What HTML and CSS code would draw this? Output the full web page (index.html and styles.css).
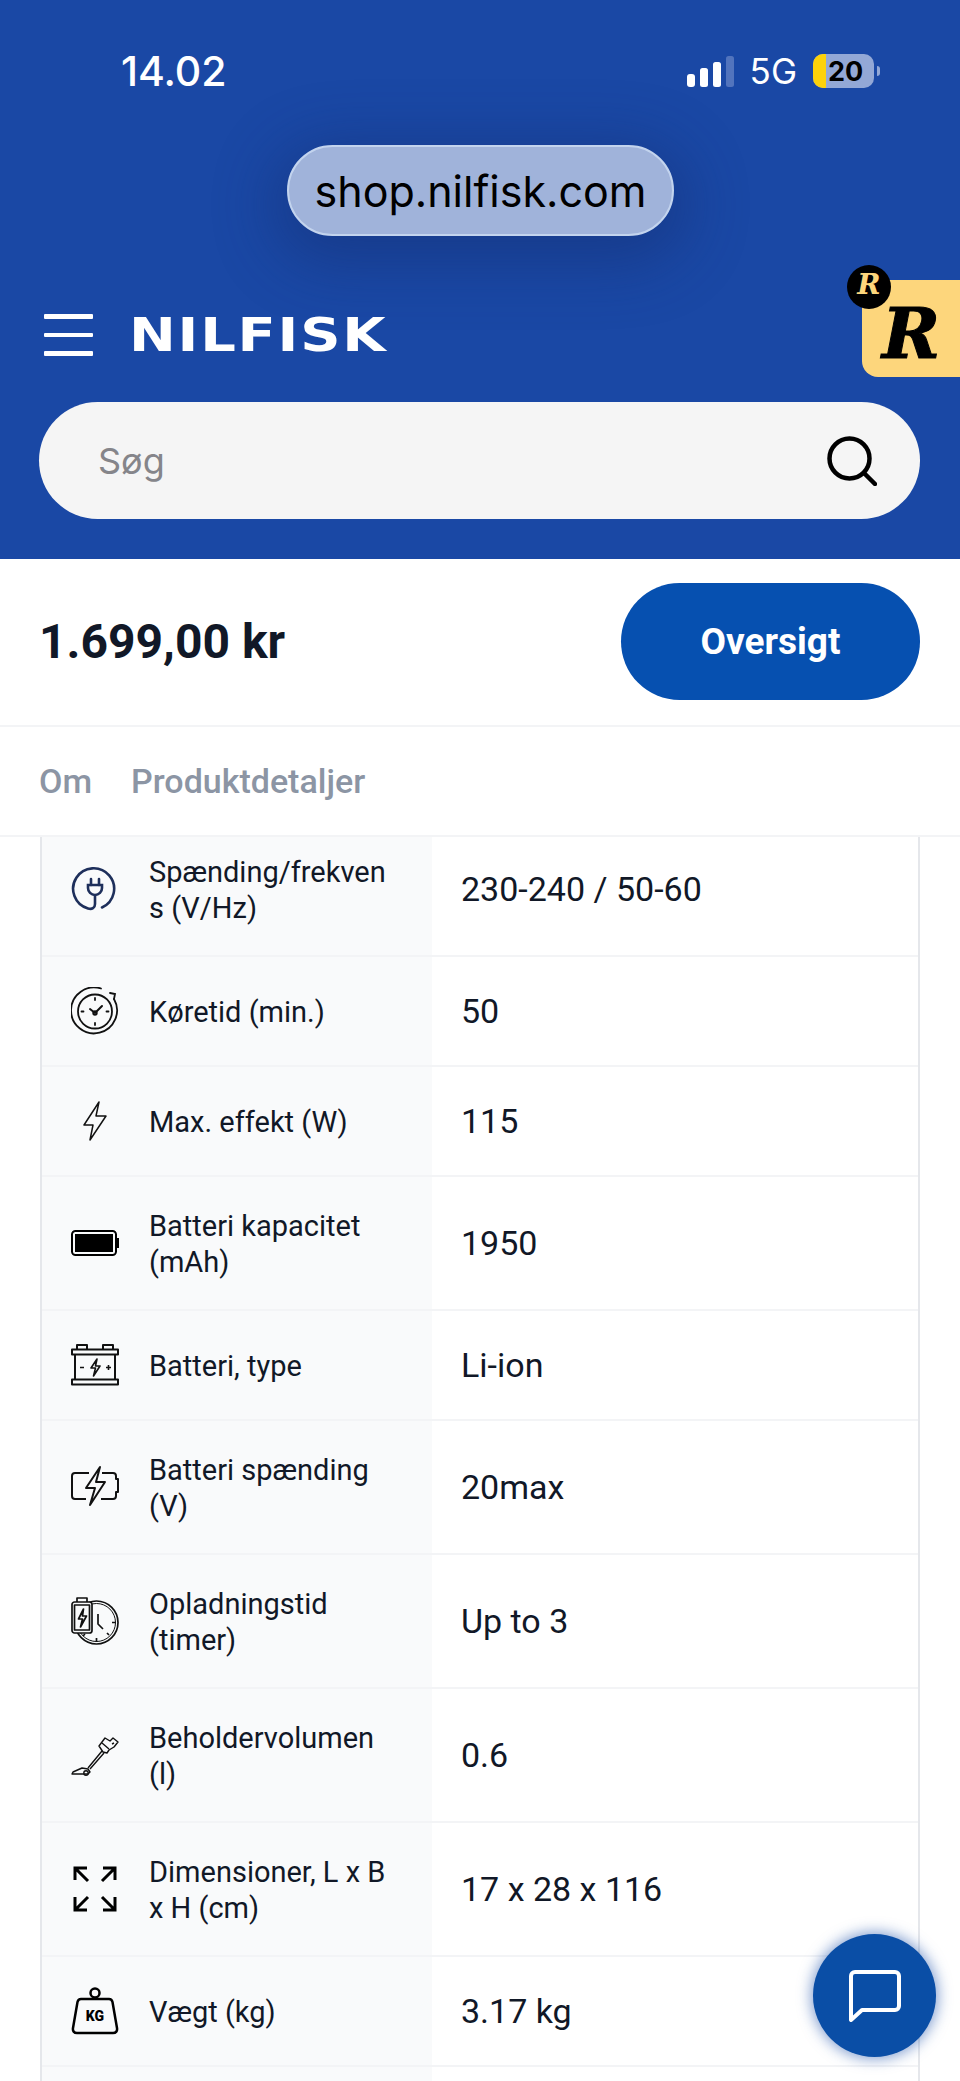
FILE: index.html
```html
<!DOCTYPE html>
<html lang="da">
<head>
    <meta charset="UTF-8">
    <meta name="viewport" content="width=device-width, initial-scale=1.0">
    <title>Nilfisk</title>
    <link rel="stylesheet" href="styles.css">
</head>
<body>
    <div class="page">
        <header class="top">
            <div class="status">
                <span class="time">14.02</span>
                <div class="status-right">
                    <svg class="signal" viewBox="0 0 47 31" width="47" height="31">
                        <rect x="0" y="18" width="8" height="13" rx="3" fill="#fff"/>
                        <rect x="13" y="12" width="8" height="19" rx="2.5" fill="#fff"/>
                        <rect x="26" y="6" width="8" height="25" rx="2.5" fill="#fff"/>
                        <rect x="39" y="0" width="8" height="31" rx="2.5" fill="#5274bd"/>
                    </svg>
                    <span class="net">5G</span>
                    <div class="battery"><span class="battery-fill"></span><span class="battery-num">20</span></div>
                    <span class="battery-nub"></span>
                </div>
            </div>
            <div class="url-wrap"><div class="url">shop.nilfisk.com</div></div>
            <div class="brand">
                <div class="burger"><span></span><span></span><span></span></div>
                <div class="logo">NILFISK</div>
            </div>
            <div class="search">
                <span class="search-text">Søg</span>
                <svg viewBox="0 0 50 50" width="50" height="50" fill="none" stroke="#000" stroke-width="4.5" stroke-linecap="round">
                    <circle cx="22.5" cy="22.5" r="20"/>
                    <path d="M37 37l11 11"/>
                </svg>
            </div>
            <div class="rewards">
                <span class="rewards-r">R</span>
                <span class="rewards-dot">R</span>
            </div>
        </header>

        <div class="price-bar">
            <span class="price">1.699,00 kr</span>
            <button class="overview">Oversigt</button>
        </div>

        <nav class="tabs">
            <span>Om</span>
            <span>Produktdetaljer</span>
        </nav>

        <div class="specs-view">
            <div class="specs">
                <div class="row tall">
                    <div class="cell-name">
                        <svg class="ico" viewBox="0 0 48 48" fill="none" stroke="#1e2f5b" stroke-width="2.6" stroke-linecap="round">
                            <path d="M31 42.5A20.5 20.5 0 1 0 17 43.5c4 1.2 7-.5 7-4.500V31"/>
                            <path d="M17 20h14v3a7 7 0 0 1-14 0z"/>
                            <path d="M20 14v6M28 14v6"/>
                        </svg>
                        <span class="label">Spænding/frekvens (V/Hz)</span>
                    </div>
                    <div class="cell-value">230-240 / 50-60</div>
                </div>
                <div class="row">
                    <div class="cell-name">
                        <svg class="ico" viewBox="0 0 48 48" fill="none" stroke="#111" stroke-width="1.800" stroke-linecap="round">
                            <path d="M30 1.500A23 23 0 1 0 43 12"/>
                            <path d="M39 6l5 1-1 5"/>
                            <circle cx="24" cy="24.500" r="17"/>
                            <path d="M24 26l-5-4M24 26l7-7" stroke-width="2"/>
                            <circle cx="24" cy="26" r="1.800"/>
                            <path d="M24 11v2M24 36v2M10.500 24.500h2M35.500 24.500h2"/>
                        </svg>
                        <span class="label">Køretid (min.)</span>
                    </div>
                    <div class="cell-value">50</div>
                </div>
                <div class="row">
                    <div class="cell-name">
                        <svg class="ico" viewBox="0 0 48 48" fill="none" stroke="#111" stroke-width="1.500" stroke-linejoin="round">
                            <path d="M28 5L13 28h9l-3 15 16-24h-10z"/>
                        </svg>
                        <span class="label">Max. effekt (W)</span>
                    </div>
                    <div class="cell-value">115</div>
                </div>
                <div class="row tall">
                    <div class="cell-name">
                        <svg class="ico" viewBox="0 0 48 48">
                            <rect x="1" y="12" width="44" height="24" rx="3.500" fill="none" stroke="#000" stroke-width="2"/>
                            <rect x="4" y="15" width="38" height="18" fill="#000"/>
                            <rect x="45.500" y="19" width="2.500" height="10" fill="#000"/>
                        </svg>
                        <span class="label">Batteri kapacitet (mAh)</span>
                    </div>
                    <div class="cell-value">1950</div>
                </div>
                <div class="row">
                    <div class="cell-name">
                        <svg class="ico" viewBox="0 0 48 48" fill="none" stroke="#111" stroke-width="2" stroke-linejoin="round">
                            <path d="M6 8V4h10v4M32 8V4h10v4"/>
                            <rect x="1" y="8.500" width="46" height="5"/>
                            <path d="M4 13.500v25M44 13.500v25"/>
                            <rect x="1" y="38.500" width="46" height="5"/>
                            <path d="M9 26.500h4M35 26.500h5M37.500 24v5" stroke-width="1.600"/>
                            <path d="M26 18l-6 9h4.500l-2 8 6.500-10h-4.500z" stroke-width="1.600"/>
                        </svg>
                        <span class="label">Batteri, type</span>
                    </div>
                    <div class="cell-value">Li-ion</div>
                </div>
                <div class="row tall">
                    <div class="cell-name">
                        <svg class="ico" viewBox="0 0 48 48" fill="none" stroke="#111" stroke-width="2" stroke-linejoin="round">
                            <path d="M18 10H4a3 3 0 0 0-3 3v20a3 3 0 0 0 3 3h11"/>
                            <path d="M31 10h11a3 3 0 0 1 3 3v3h2v13h-2v4a3 3 0 0 1-3 3H30"/>
                            <path d="M29 4L15 25h9l-5 17 15-23h-9z"/>
                        </svg>
                        <span class="label">Batteri spænding (V)</span>
                    </div>
                    <div class="cell-value">20max</div>
                </div>
                <div class="row tall">
                    <div class="cell-name">
                        <svg class="ico" viewBox="0 0 48 48" fill="none" stroke="#111" stroke-width="1.700" stroke-linejoin="round">
                            <circle cx="25.500" cy="25.500" r="21.500"/>
                            <circle cx="25.500" cy="25.500" r="19" stroke-width="1"/>
                            <path d="M27 17v10l5 5M41 25.500h4M25.500 41v4M36 36l2 2M14 37l-2 2"/>
                            <rect x="1" y="5" width="20" height="31" rx="2.500" fill="#f9fafb"/>
                            <path d="M6 5V1h10v4"/>
                            <rect x="3.500" y="8" width="15" height="25"/>
                            <path d="M12.500 12l-5 10h4l-2 8 6-11h-4z"/>
                        </svg>
                        <span class="label">Opladningstid (timer)</span>
                    </div>
                    <div class="cell-value">Up to 3</div>
                </div>
                <div class="row tall">
                    <div class="cell-name">
                        <svg class="ico" viewBox="0 0 48 48" fill="none" stroke="#111" stroke-width="1.400" stroke-linejoin="round">
                            <path d="M17 37L31 20M19 38L33 22"/>
                            <path d="M28 15l6-8 5 3 3-3 5 4-4 5-5 3-2 3-4-1z"/>
                            <path d="M31 12l7 6M43 12l-2 1"/>
                            <path d="M1 43l1-2 9-4 6 1 2 3-2 2z"/>
                            <circle cx="15" cy="42" r="2.200"/>
                        </svg>
                        <span class="label">Beholdervolumen (l)</span>
                    </div>
                    <div class="cell-value">0.6</div>
                </div>
                <div class="row tall">
                    <div class="cell-name">
                        <svg class="ico" viewBox="0 0 48 48" fill="none" stroke="#000" stroke-width="3">
                            <path d="M4 15V3h12M4 3l13 13"/>
                            <path d="M44 15V3H32M44 3L31 16"/>
                            <path d="M4 32v13h12M4 45l13-13"/>
                            <path d="M44 32v13H32M44 45L31 32"/>
                        </svg>
                        <span class="label">Dimensioner, L x B x H (cm)</span>
                    </div>
                    <div class="cell-value">17 x 28 x 116</div>
                </div>
                <div class="row">
                    <div class="cell-name">
                        <svg class="ico" viewBox="0 0 48 48" fill="none" stroke="#000" stroke-width="2.500" stroke-linejoin="round">
                            <circle cx="24" cy="6" r="4.500"/>
                            <path d="M10 12h28c2 0 3 1 3.500 3L46 41c.5 3-1 5-4 5H6c-3 0-4.500-2-4-5L6.500 15c.5-2 1.500-3 3.500-3z"/>
                            <text class="kg" x="24" y="34" text-anchor="middle">KG</text>
                        </svg>
                        <span class="label">Vægt (kg)</span>
                    </div>
                    <div class="cell-value">3.17 kg</div>
                </div>
                <div class="row">
                    <div class="cell-name"></div>
                    <div class="cell-value"></div>
                </div>
            </div>
        </div>

        <button class="chat">
            <svg viewBox="0 0 52 52" width="52" height="52" fill="none" stroke="#fff" stroke-width="4" stroke-linejoin="round">
                <path d="M2 6a4 4 0 0 1 4-4h40a4 4 0 0 1 4 4v30a4 4 0 0 1-4 4H13L2 50z"/>
            </svg>
        </button>
    </div>
</body>
</html>
```

FILE: styles.css
```css
body {
    margin: 0;
    background: #fff;
    font-family: 'Roboto', 'Liberation Sans', sans-serif;
    color: #111827;
}
.page {
    position: relative;
    width: 960px;
    height: 2081px;
    overflow: hidden;
    display: flex;
    flex-direction: column;
}

/* blue header */
.top {
    position: relative;
    background: #1a48a5;
    padding: 51px 40px 40px 39px;
}
.status {
    display: flex;
    justify-content: space-between;
    align-items: center;
    height: 40px;
    padding-left: 82px;
}
.time {
    font-family: 'Inter', sans-serif;
    font-size: 41px;
    font-weight: 500;
    color: #fff;
}
.status-right {
    display: flex;
    align-items: center;
    margin-right: 40px;
}
.net {
    font-family: 'Inter', sans-serif;
    font-size: 35px;
    color: #fff;
    margin: 0 16px 0 16px;
}
.battery {
    position: relative;
    width: 61px;
    height: 34px;
    border-radius: 10px;
    overflow: hidden;
    background: #93a8d6;
    display: flex;
    align-items: center;
    justify-content: center;
}
.battery-fill {
    position: absolute;
    left: 0;
    top: 0;
    bottom: 0;
    width: 13px;
    background: #fdd20a;
}
.battery-num {
    position: relative;
    font-family: 'Inter', sans-serif;
    font-size: 27px;
    font-weight: 700;
    color: #000;
    padding-left: 4px;
}
.battery-nub {
    width: 3px;
    height: 10px;
    margin-left: 3px;
    border-radius: 0 3px 3px 0;
    background: #93a8d6;
}
.url-wrap {
    display: flex;
    justify-content: center;
    margin: 54px 0 79px 2px;
}
.url {
    width: 387px;
    height: 91px;
    box-sizing: border-box;
    border: 2px solid #c3d4ee;
    border-radius: 46px;
    background: #a0b3da;
    box-shadow: 0 14px 60px 14px rgba(20, 45, 110, 0.45);
    display: flex;
    align-items: center;
    justify-content: center;
    font-family: 'Inter', sans-serif;
    font-size: 43px;
    color: #000;
}
.brand {
    display: flex;
    align-items: center;
    gap: 36px;
    height: 40px;
    padding-left: 5px;
}
.burger {
    width: 49px;
    display: flex;
    flex-direction: column;
    gap: 14px;
}
.burger span {
    height: 4.5px;
    background: #fff;
    border-radius: 1px;
}
.logo {
    font-family: 'DejaVu Sans', sans-serif;
    font-size: 47px;
    font-weight: 700;
    letter-spacing: 1.5px;
    line-height: 40px;
    color: #fff;
    transform: scaleX(1.19);
    transform-origin: left center;
}
.search {
    display: flex;
    justify-content: space-between;
    align-items: center;
    margin-top: 47px;
    height: 117px;
    padding: 0 43px 0 59px;
    border-radius: 59px;
    background: #f5f5f5;
}
.search-text {
    font-family: 'Inter', sans-serif;
    font-size: 36px;
    color: #85858a;
}

/* rewards tab on the right edge */
.rewards {
    position: absolute;
    right: 0;
    top: 280px;
    width: 98px;
    height: 97px;
    background: #fdd67c;
    border-radius: 0 0 0 16px;
}
.rewards-r {
    position: absolute;
    left: 20px;
    top: 26px;
    font-family: 'DejaVu Serif', serif;
    font-size: 70px;
    line-height: 56px;
    font-weight: 700;
    font-style: italic;
    color: #000;
    -webkit-text-stroke: 1px #000;
}
.rewards-dot {
    position: absolute;
    left: -15px;
    top: -15px;
    width: 44px;
    height: 44px;
    border-radius: 50%;
    background: #000;
    color: #fdd67c;
    font-family: 'DejaVu Serif', serif;
    font-size: 28px;
    font-weight: 700;
    font-style: italic;
    line-height: 30px;
    box-sizing: border-box;
    padding-top: 5px;
    text-align: center;
}

/* price + button */
.price-bar {
    display: flex;
    justify-content: space-between;
    align-items: center;
    padding: 24px 40px 25px 39px;
    border-bottom: 2px solid #f3f4f6;
}
.price {
    font-size: 48px;
    font-weight: 700;
    color: #111827;
}
.overview {
    width: 299px;
    height: 117px;
    border: none;
    border-radius: 59px;
    background: #0650b0;
    color: #fff;
    font-family: 'Roboto', sans-serif;
    font-size: 37px;
    font-weight: 700;
}

.tabs {
    display: flex;
    align-items: center;
    gap: 39px;
    height: 108px;
    padding: 0 39px;
    border-bottom: 2px solid #f3f4f6;
    font-size: 34px;
    font-weight: 500;
    color: #8c95a4;
}

/* spec table, scrolled a little under the tabs */
.specs-view {
    flex: 1;
    overflow: hidden;
}
.specs {
    margin: -14px 40px 0;
    border-left: 2px solid #e5e7eb;
    border-right: 2px solid #e5e7eb;
}
.row {
    display: grid;
    grid-template-columns: 390px 1fr;
    min-height: 110px;
    box-sizing: border-box;
    border-bottom: 2px solid #f3f4f6;
}
.tall {
    min-height: 134px;
}
.cell-name {
    display: flex;
    align-items: center;
    gap: 30px;
    padding: 0 38px 0 29px;
    background: #f9fafb;
}
.ico {
    flex: none;
    width: 48px;
    height: 48px;
}
.kg {
    font-family: 'Roboto', sans-serif;
    font-size: 14px;
    font-weight: 900;
    fill: #000;
    stroke: none;
}
.label {
    padding-top: 1px;
    font-size: 29px;
    line-height: 36px;
    overflow-wrap: anywhere;
}
.cell-value {
    display: flex;
    align-items: center;
    padding-left: 29px;
    font-size: 34px;
}

.chat {
    position: absolute;
    left: 813px;
    top: 1934px;
    width: 123px;
    height: 123px;
    padding: 0;
    border: none;
    border-radius: 50%;
    background: #0a4ea6;
    box-shadow: 0 0 14px 2px rgba(30, 80, 170, 0.55);
    display: flex;
    align-items: center;
    justify-content: center;
}
```
